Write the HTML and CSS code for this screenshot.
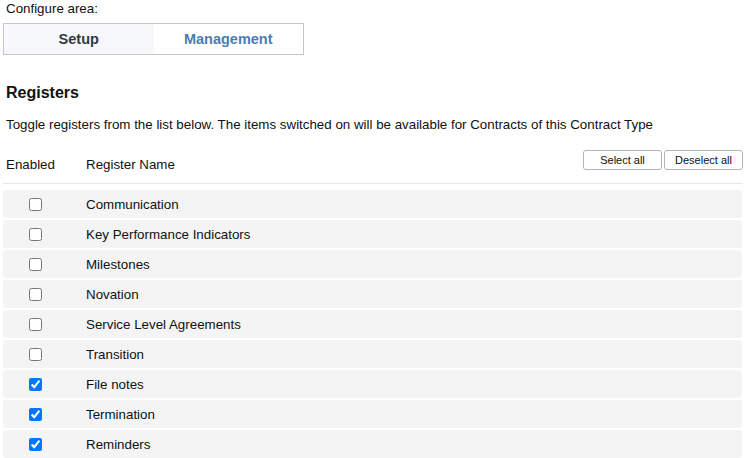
FILE: index.html
```html
<!DOCTYPE html>
<html lang="en">
<head>
    <meta charset="UTF-8">
    <title>Configure area</title>
    <link rel="stylesheet" href="styles.css">
</head>
<body>
    <div class="page">
        <div class="area-label">Configure area:</div>
        <div class="tabs">
            <div class="tab active">Setup</div>
            <div class="tab">Management</div>
        </div>

        <h2 class="title">Registers</h2>
        <p class="desc">Toggle registers from the list below. The items switched on will be available for Contracts of this Contract Type</p>

        <div class="list-head">
            <div class="col-enabled">Enabled</div>
            <div class="col-name">Register Name</div>
            <div class="actions">
                <button type="button" class="btn">Select all</button>
                <button type="button" class="btn">Deselect all</button>
            </div>
        </div>

        <ul class="registers">
            <li class="row"><span class="cell-check"><input type="checkbox"></span><span>Communication</span></li>
            <li class="row"><span class="cell-check"><input type="checkbox"></span><span>Key Performance Indicators</span></li>
            <li class="row"><span class="cell-check"><input type="checkbox"></span><span>Milestones</span></li>
            <li class="row"><span class="cell-check"><input type="checkbox"></span><span>Novation</span></li>
            <li class="row"><span class="cell-check"><input type="checkbox"></span><span>Service Level Agreements</span></li>
            <li class="row"><span class="cell-check"><input type="checkbox"></span><span>Transition</span></li>
            <li class="row"><span class="cell-check"><input type="checkbox" checked></span><span>File notes</span></li>
            <li class="row"><span class="cell-check"><input type="checkbox" checked></span><span>Termination</span></li>
            <li class="row"><span class="cell-check"><input type="checkbox" checked></span><span>Reminders</span></li>
        </ul>
    </div>
</body>
</html>
```

FILE: styles.css
```css
body {
    margin: 0;
    font-family: "Liberation Sans", Arial, sans-serif;
    font-size: 13.33px;
    color: #111;
    background: #fff;
}
.page {
    width: 740px;
    padding: 1px 3px 0 3px;
}
.area-label {
    padding-left: 3px;
    line-height: 16px;
}
.tabs {
    display: flex;
    width: 299px;
    margin-top: 6px;
    border: 1px solid #c6c6c6;
}
.tab {
    flex: 1;
    height: 30px;
    line-height: 30px;
    text-align: center;
    font-size: 14.5px;
    font-weight: bold;
    color: #4a7db3;
}
.tab.active {
    background: #f7f8fc;
    color: #2f3a40;
}
.title {
    margin: 28px 0 0 3px;
    font-size: 16px;
    line-height: 20px;
}
.desc {
    margin: 14px 0 0 3px;
    line-height: 16px;
}
.list-head {
    display: flex;
    align-items: center;
    margin-top: 14px;
    padding: 0 0 11px 3px;
    border-bottom: 1px solid #e6e6e6;
}
.col-enabled {
    width: 80px;
    margin-top: 10px;
}
.col-name {
    flex: 1;
    margin-top: 10px;
}
.actions {
    display: flex;
    gap: 2px;
}
.btn {
    width: 79px;
    height: 20px;
    padding: 0;
    font-family: inherit;
    font-size: 11px;
    color: #111;
    background: #fff;
    border: 1px solid #b4b4b4;
    border-radius: 3px;
}
.registers {
    list-style-type: none;
    margin: 6px 0 0 0;
    padding: 0;
}
.row {
    display: flex;
    align-items: center;
    height: 28px;
    margin-bottom: 2px;
    background: #f4f4f4;
    border-radius: 3px;
    width: 739px;
}
.cell-check {
    width: 83px;
    padding-left: 26px;
    box-sizing: border-box;
    display: flex;
}
.cell-check input {
    margin: 0;
    width: 13px;
    height: 13px;
}
```
